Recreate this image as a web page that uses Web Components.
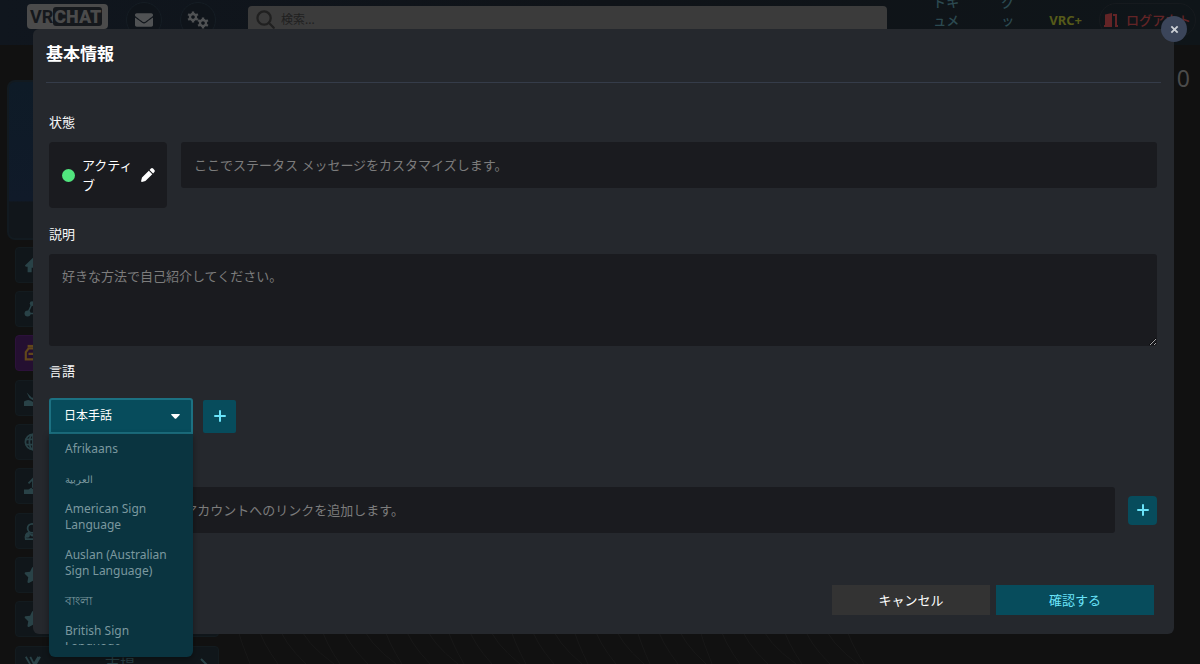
<!DOCTYPE html>
<html lang="ja">
<head>
<meta charset="utf-8">
<meta name="viewport" content="width=device-width, initial-scale=1">
<title>VRChat - 基本情報</title>
<style>
  html, body { margin: 0; height: 100%; }
  body {
    background: #111111;
    color: #f8f9fa;
    font: 13px/20px "Noto Sans", "Noto Sans CJK JP", sans-serif;
    overflow: hidden;
  }
</style>
</head>
<body>
<vrc-app></vrc-app>

<script>
const define = (name, html, setup) => {
  const template = document.createElement('template');
  template.innerHTML = '<style>*{box-sizing:border-box}button,input,textarea,select{font:inherit;color:inherit;margin:0}</style>' + html;
  customElements.define(name, class extends HTMLElement {
    constructor() {
      super();
      this.attachShadow({ mode: 'open' }).append(template.content.cloneNode(true));
    }
    connectedCallback() { if (setup) setup(this, this.shadowRoot); }
  });
};

const gear = (x, y) => `<g transform="translate(${x} ${y})" fill="none" stroke="currentColor"><circle r="3" stroke-width="2.4"/><path stroke-width="2.4" d="M0-3.4V-5.6M0 3.4V5.6M2.9-1.7 4.9-2.8M2.9 1.7 4.9 2.8M-2.9-1.7-4.9-2.8M-2.9 1.7-4.9 2.8"/></g>`;
const ICONS = {
  mail: ['0 0 512 512', '<path d="M502.3 190.8c3.9-3.1 9.7-.2 9.7 4.7V400c0 26.5-21.5 48-48 48H48c-26.5 0-48-21.5-48-48V195.6c0-5 5.7-7.8 9.7-4.7 22.4 17.4 52.1 39.5 154.1 113.6 21.1 15.4 56.7 47.8 92.2 47.6 35.7.3 72-32.8 92.3-47.6 102-74.1 131.6-96.3 154-113.7zM256 320c23.2.4 56.6-29.2 73.4-41.4 132.7-96.3 142.8-104.7 173.4-128.7 5.8-4.5 9.2-11.5 9.2-18.9v-19c0-26.5-21.5-48-48-48H48c-26.5 0-48 21.5-48 48v19c0 7.4 3.4 14.3 9.2 18.9 30.6 23.9 40.7 32.4 173.4 128.7 16.8 12.2 50.2 41.8 73.4 41.4z"/>'],
  gears: ['0 0 22 18', gear(6, 6) + gear(16, 12)],
  search: ['0 0 20 20', '<g fill="none" stroke="currentColor" stroke-width="2.4"><circle cx="8.5" cy="8.5" r="7"/><path stroke-linecap="round" d="m13.7 13.7 5 5"/></g>'],
  pen: ['0 0 14 14', '<path d="M7.8 2.7 11.3 6.2 4.4 13 .9 13.9Q0 14 .1 13.1L1 9.5ZM8.6 1.9 9.9.6Q11 -.4 12.1.6L13.4 1.9Q14.4 3 13.4 4.1L12.1 5.4Z"/>'],
  door: ['0 0 14 14', '<path d="M1 1.5 8 0V14H0V12H1ZM9 1H13V12H14V14H11V3H9Z"/>'],
  close: ['0 0 10 10', '<path fill="none" stroke="currentColor" stroke-width="2" d="m1.5 1.5 7 7m0-7-7 7"/>'],
  plus: ['0 0 12 12', '<path fill="none" stroke="currentColor" stroke-width="2" stroke-linecap="round" d="M6 1v10M1 6h10"/>'],
  chevron: ['0 0 12 12', '<path fill="none" stroke="currentColor" stroke-width="2" d="m3 1 5 5-5 5"/>'],
  home: ['0 0 20 20', '<path d="M10 2 19 10.5 18 12H16V18H11.5V13H8.5V18H4V12H2L1 10.5Z"/>'],
  nodes: ['0 0 20 20', '<path fill="none" stroke="currentColor" stroke-width="1.6" d="M4 15 9 4 16 15Z"/><circle cx="4" cy="15" r="3.4"/><circle cx="9" cy="4" r="2.6"/><circle cx="16" cy="15" r="3"/>'],
  jar: ['0 0 20 20', '<path d="M4 1H16V4H4Z"/><path fill="none" stroke="currentColor" stroke-width="2.4" d="M5 5H15L17 9V17H2V9ZM5 11H14"/>'],
  build: ['0 0 20 20', '<path d="M0 14Q5 10 11 15H19V19H0ZM3 4 9 10 18 2 12 14 6 10Z"/>'],
  globe: ['0 0 20 20', '<g fill="none" stroke="currentColor" stroke-width="2"><circle cx="10" cy="10" r="8.4"/><ellipse cx="10" cy="10" rx="4" ry="8.4"/><path d="M2 7H18M2 13H18M10 1V19"/></g>'],
  hand: ['0 0 20 20', '<path d="M0 14H5L8 12 12 15H18V19H0Z"/><path fill="none" stroke="currentColor" stroke-width="2" d="M10 12V3M5 7 10 2 15 7"/>'],
  user: ['0 0 20 20', '<g fill="none" stroke="currentColor" stroke-width="2"><circle cx="9" cy="7" r="5"/><path d="M2 19Q1 13 5 12L9 15 13 12Q18 13 18 19Z"/></g><circle cx="4" cy="15" r="2.5"/>'],
  star: ['0 0 576 512', '<path d="M259.3 17.8L194 150.2 47.9 171.5c-26.2 3.8-36.7 36.1-17.7 54.6l105.7 103-25 145.5c-4.5 26.3 23.2 46 46.4 33.7L288 439.6l130.7 68.7c23.2 12.2 50.9-7.4 46.4-33.7l-25-145.5 105.7-103c19-18.5 8.5-50.8-17.7-54.6L382 150.2 316.7 17.8c-11.7-23.6-45.6-23.9-57.4 0z"/>'],
  market: ['0 0 20 20', '<path fill="none" stroke="currentColor" stroke-width="2" d="m2 2 7 12V20M7 2l4 8 5-8M18 2 11 14V20"/>']
};

define('vrc-icon', `
  <style>:host{display:block;flex:none;width:18px;height:18px}svg{display:block;width:100%;height:100%;fill:currentColor;overflow:visible}</style>
  <svg aria-hidden="true"></svg>`, (el, root) => {
  const icon = ICONS[el.getAttribute('name')];
  if (!icon) return;
  const svg = root.querySelector('svg');
  svg.setAttribute('viewBox', icon[0]);
  svg.innerHTML = icon[1];
});

define('vrc-header', `
  <style>
    :host{display:flex;align-items:center;height:45px;padding:0 4px 6px 27px;background:linear-gradient(90deg,#10161e,#0f1318 50%,#0f1519);overflow:hidden;color:#2c4a51}
    a{flex:none;text-decoration:none;color:inherit;line-height:18px;font-weight:500}
    .logo{display:flex;align-items:center;width:81px;height:25px;margin-top:-6px;padding:0 3px;border-radius:4px;background:#4b4b4b;color:#15181c;font:bold 18px/19px "Roboto",sans-serif;white-space:nowrap}
    .logo b{display:block;padding:0 1px;border-radius:3px;background:#15181c;color:#4b4b4b}
    .round{display:grid;place-items:center;flex:none;width:36px;height:36px;margin-left:18px;padding:0;border:1px solid #151d24;border-radius:50%;background:#0f141a;color:#505254}
    .gears{width:22px}
    .search{display:flex;flex:1;align-items:flex-start;gap:6px;height:36px;margin:6px 46px 0 32px;padding:4px 8px;border-radius:4px;background:#3b3b3b;color:#202020;align-self:flex-start}
    .search vrc-icon{width:19px;height:19px}
    input{flex:1;min-width:0;height:20px;padding:0;border:0;background:none;font-size:12px;outline:0}
    input::placeholder{color:#202020;opacity:1}
    .doc{width:26px;margin-right:42px;word-break:break-all}
    .goods{width:13px;margin-right:35px;word-break:break-all}
    .plus{margin-right:17px;color:#565a19;font-weight:700}
    .out{display:flex;align-items:center;gap:8px;height:34px;padding:0 4px;border:1px solid #161a1e;border-radius:17px;color:#632426;white-space:nowrap}
    .out vrc-icon{width:14px;height:14px}
  </style>
  <a class="logo" href="#">VR<b>CHAT</b></a>
  <button class="round" aria-label="メッセージ"><vrc-icon name="mail"></vrc-icon></button>
  <button class="round" aria-label="設定"><vrc-icon class="gears" name="gears"></vrc-icon></button>
  <label class="search"><vrc-icon name="search"></vrc-icon><input type="search" aria-label="検索" placeholder="検索..."></label>
  <a class="doc" href="#">ドキュメント</a>
  <a class="goods" href="#">グッズ</a>
  <a class="plus" href="#">VRC+</a>
  <a class="out" href="#"><vrc-icon name="door"></vrc-icon>ログアウト</a>`);

define('vrc-nav-item', `
  <style>
    :host{display:block}
    a{display:flex;align-items:center;height:36px;padding:0 8px;border:1px solid #131b1f;border-radius:4px;background:#10161a;color:#294247;text-decoration:none;font-size:15px}
    :host([active]) a{background:#240f31;border-color:#2c113a;color:#62471b}
    .text{flex:1;text-align:center}
    .arrow{width:12px;height:12px}
  </style>
  <a href="#"><span class="text"><slot></slot></span><vrc-icon class="arrow" name="chevron"></vrc-icon></a>`,
  (el, root) => {
    const link = root.querySelector('a');
    const icon = document.createElement('vrc-icon');
    icon.setAttribute('name', el.getAttribute('icon'));
    link.prepend(icon);
    link.setAttribute('aria-label', el.getAttribute('icon'));
  });

define('vrc-sidebar', `
  <style>
    :host{display:block;width:228px;padding:35px 9px 0 7px}
    .card{height:160px;margin-bottom:7px;border:2px solid #121a20;border-radius:8px;background:linear-gradient(#0e1b27,#101a29 76%,#11161b 77%)}
    nav,.group{display:grid;gap:9px}
    nav{padding-left:8px}
    .group{gap:8px}
  </style>
  <div class="card"></div>
  <nav>
    <div class="group"><vrc-nav-item icon="home"></vrc-nav-item><vrc-nav-item icon="nodes"></vrc-nav-item><vrc-nav-item icon="jar" active></vrc-nav-item></div>
    <div class="group"><vrc-nav-item icon="build"></vrc-nav-item><vrc-nav-item icon="globe"></vrc-nav-item><vrc-nav-item icon="hand"></vrc-nav-item></div>
    <div class="group"><vrc-nav-item icon="user"></vrc-nav-item><vrc-nav-item icon="star"></vrc-nav-item><vrc-nav-item icon="star"></vrc-nav-item></div>
    <vrc-nav-item icon="market">市場</vrc-nav-item>
  </nav>`);

define('vrc-icon-button', `
  <style>
    :host{display:block;flex:none;width:33px;height:33px}
    button{display:grid;place-items:center;width:100%;height:100%;padding:0;border:0;border-radius:var(--radius,2px);background:#074c5c;color:#6ae3f9}
    vrc-icon{width:12px;height:12px}
  </style>
  <button aria-label="追加"><vrc-icon name="plus"></vrc-icon></button>`);

define('vrc-language-select', `
  <style>
    :host{display:block;position:relative;width:144px;font-size:12px}
    .box{display:grid;align-items:center}
    select{grid-area:1/1;appearance:none;width:100%;height:36px;padding:0 30px 0 13px;border:2px solid #1c7182;border-radius:3px 3px 0 0;background:#074c5c;color:#fff;font-size:12px;outline:0}
    svg{grid-area:1/1;justify-self:end;margin-right:13px;fill:#fff;pointer-events:none}
    .menu{position:absolute;z-index:2;top:36px;left:0;right:0;padding-bottom:12px;border-radius:0 0 6px 6px;background:#0a3440;box-shadow:0 2px 6px #0006}
    ul{height:211px;margin:0;padding:0;list-style:none;overflow:hidden;color:#7b989f}
    li{padding:7px 16px;line-height:16px}
    .small{font-size:10px}
  </style>
  <div class="box">
    <select aria-label="言語"><option>日本手話</option></select>
    <svg width="9" height="5" viewBox="0 0 9 5" aria-hidden="true"><path d="M.6 0H8.4Q9.2.4 8.6 1L5 4.7Q4.5 5 4 4.7L.4 1Q-.2.4.6 0Z"/></svg>
  </div>
  <div class="menu"><ul role="listbox" aria-label="言語の一覧">
    <li role="option">Afrikaans</li>
    <li role="option" class="small" lang="ar">العربية</li>
    <li role="option">American Sign Language</li>
    <li role="option">Auslan (Australian Sign Language)</li>
    <li role="option" lang="bn">বাংলা</li>
    <li role="option">British Sign Language</li>
  </ul></div>`);

define('vrc-profile-form', `
  <style>
    :host{display:block;padding:29px 4px 0 3px}
    form{display:block}
    label{display:block}
    .row{display:flex;align-items:flex-start;gap:14px;margin:10px 0 16px}
    .status{display:flex;align-items:center;gap:7px;flex:none;width:118px;height:66px;padding:0 12px 0 13px;border:0;border-radius:4px;background:#1a1b1f;color:#fff;text-align:left}
    .dot{flex:none;width:13px;height:13px;border-radius:50%;background:#51e57e}
    .status .name{flex:1;word-break:break-all}
    .status vrc-icon{width:14px;height:14px}
    input,textarea{display:block;width:100%;padding:0 13px;border:0;border-radius:3px;background:#1a1b1f;outline:0}
    input{flex:1;min-width:0;height:46px}
    ::placeholder{color:#7c7c7c;opacity:1}
    textarea{height:92px;margin:10px 0 15px;padding:12px 13px;resize:vertical}
    .languages{display:flex;align-items:center;gap:10px;margin-top:17px}
    .links{display:flex;align-items:center;gap:13px;margin-top:53px}
    .links input{padding:0 16px}
    .links vrc-icon-button{width:29px;height:29px;--radius:4px}
    .actions{display:flex;justify-content:flex-end;gap:6px;padding:52px 3px 19px 0}
    .actions button{width:158px;height:30px;padding:0;border:0;background:#333333;color:#fff}
    .actions .ok{background:#074c5c;color:#6ae3f9}
  </style>
  <form onsubmit="return false">
    <label for="message">状態</label>
    <div class="row">
      <button type="button" class="status"><span class="dot"></span><span class="name">アクティブ</span><vrc-icon name="pen"></vrc-icon></button>
      <input id="message" placeholder="ここでステータス メッセージをカスタマイズします。">
    </div>
    <label for="bio">説明</label>
    <textarea id="bio" placeholder="好きな方法で自己紹介してください。"></textarea>
    <label>言語</label>
    <div class="languages"><vrc-language-select></vrc-language-select><vrc-icon-button></vrc-icon-button></div>
    <div class="links"><input aria-label="リンク" placeholder="ソーシャルメディア アカウントへのリンクを追加します。"><vrc-icon-button></vrc-icon-button></div>
    <div class="actions"><button type="button">キャンセル</button><button class="ok">確認する</button></div>
  </form>`);

define('vrc-dialog', `
  <style>
    :host{display:block;position:absolute;z-index:1;top:29px;left:33px;right:26px;padding:0 13px;border-radius:6px;background:#25282d}
    h2{margin:0;padding:13px 0 16px;border-bottom:1px solid #353c49;font-size:17px;line-height:24px;font-weight:700;color:#fff}
    .close{position:absolute;top:-13px;right:-13px;display:grid;place-items:center;width:26px;height:26px;padding:0;border:0;border-radius:50%;background:#3b455a;color:#ccd0d6}
    .close vrc-icon{width:9px;height:9px}
  </style>
  <h2><slot name="title"></slot></h2>
  <slot></slot>
  <button class="close" aria-label="閉じる"><vrc-icon name="close"></vrc-icon></button>`);

define('vrc-app', `
  <style>
    :host{display:block;position:relative;height:100vh;overflow:hidden}
    .page{display:flex;align-items:stretch;height:calc(100vh - 45px)}
    vrc-sidebar{flex:none}
    main{display:flex;flex-direction:column;justify-content:space-between;flex:1;min-width:0}
    .count{padding:16px 10px 0 0;text-align:right;font-size:23px;line-height:34px;color:#4b4b4b}
    .contours{display:block;width:640px;height:40px;stroke:#181818;fill:none}
  </style>
  <vrc-header></vrc-header>
  <div class="page">
    <vrc-sidebar></vrc-sidebar>
    <main>
      <div class="count">0</div>
      <svg class="contours" viewBox="0 0 640 40" aria-hidden="true"></svg>
    </main>
  </div>
  <vrc-dialog role="dialog" aria-label="基本情報">
    <span slot="title">基本情報</span>
    <vrc-profile-form></vrc-profile-form>
  </vrc-dialog>`, (el, root) => {
  let d = '';
  for (let i = 0; i < 30; i++) {
    const x = 8 + i * 21, lean = 14 + (i * 7) % 22;
    d += `M${x} 0Q${x + 5} 18 ${x + lean} 40`;
  }
  root.querySelector('.contours').innerHTML = `<path d="${d}"/>`;
});
</script>
</body>
</html>
